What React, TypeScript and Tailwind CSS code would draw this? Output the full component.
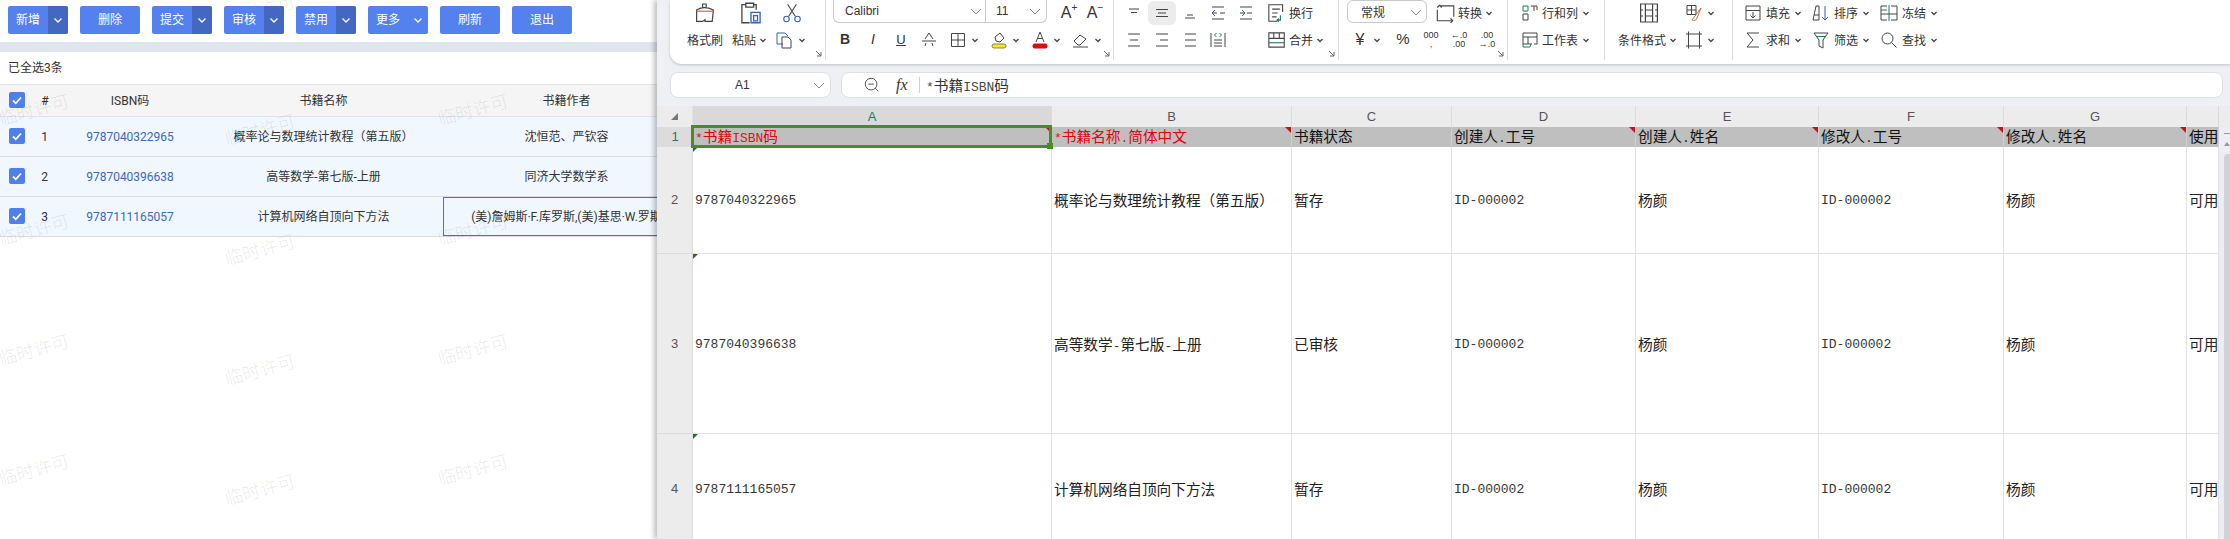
import type { ReactNode } from "react";

const CJK = `"Noto Sans CJK SC", "Liberation Sans", sans-serif`;
const LEFT_FONT = `Roboto, "Noto Sans CJK SC", sans-serif`;
const SANS = `"Liberation Sans", sans-serif`;

function Svg({ children, size = 20 }: { children: ReactNode; size?: number }) {
  return (
    <svg width={size} height={size} viewBox="0 0 20 20" fill="none" stroke="#444" strokeWidth="1" className="shrink-0">
      {children}
    </svg>
  );
}

function Chev({ big = false }: { big?: boolean }) {
  return big ? (
    <svg width="14" height="14" viewBox="0 0 14 14" fill="none" stroke="#8a8a8a" strokeWidth="1" className="shrink-0">
      <path d="M2 5l5 5 5-5" />
    </svg>
  ) : (
    <svg width="14" height="14" viewBox="0 0 14 14" fill="none" stroke="#444" strokeWidth="1.3" className="shrink-0">
      <path d="M4.500 6l2.500 2.500L9.500 6" />
    </svg>
  );
}

function Corner() {
  return (
    <svg width="7" height="7" viewBox="0 0 7 7" fill="none" stroke="#666" strokeWidth="1" className="absolute bottom-[3px] right-[3px]">
      <path d="M1 1l5 5M6 2v4H2" />
    </svg>
  );
}

const Slot = ({ w, children }: { w: string; children: ReactNode }) => (
  <div className={`flex items-center justify-center shrink-0 ${w}`}>{children}</div>
);

const icons = {
  painter: (
    <Svg size={24}>
      <path d="M8 2.500h3v3H8zM3 7.500c4-2.500 9-2.500 14 0l-1 9.500H10v-1.500L8 17H3z" />
      <path d="M3 8.500h14" stroke="#b5744a" />
    </Svg>
  ),
  paste: (
    <Svg size={26}>
      <path d="M6 3.500H3v14h6M12 3.500h2v4M6 2.500h6v3H6z" />
      <path d="M10 9.500h7v8h-7z" stroke="#2f62b8" />
      <path d="M12 12h3v4h-3z" stroke="#2f62b8" />
    </Svg>
  ),
  cut: (
    <Svg size={22}>
      <path d="M6 2l7 11M14 2L7 13" />
      <circle cx="5" cy="15.500" r="2.500" stroke="#2f62b8" />
      <circle cx="15" cy="15.500" r="2.500" stroke="#2f62b8" />
    </Svg>
  ),
  copy: (
    <Svg>
      <path d="M8 14H2V3h8l3 3" stroke="#2f62b8" />
      <path d="M7 7h6l3 3v8H7z" />
    </Svg>
  ),
  strike: (
    <Svg>
      <path d="M6 9l4-6 4 6M7 13l-1 3M13 13l1 3M3 11h14" />
    </Svg>
  ),
  border: (
    <Svg>
      <path d="M3.500 3.500h13v13h-13zM10 3.500v13M3.500 10h13" />
    </Svg>
  ),
  fill: (
    <Svg>
      <path d="M6 7l5-4 4 5-4 4-4-1z" />
      <rect x="3" y="14" width="14" height="4" rx="2" fill="#f3e62b" stroke="#8f8a20" />
    </Svg>
  ),
  font: (
    <Svg>
      <path d="M6 12l4-10 4 10M7.500 8.500h5" />
      <rect x="3" y="14" width="14" height="4" rx="1.500" fill="#dd0a0a" stroke="#dd0a0a" />
    </Svg>
  ),
  eraser: (
    <Svg>
      <path d="M3 11l6-6 6 4-6 6H7zM2 17h15" />
    </Svg>
  ),
  wrap: (
    <Svg size={22}>
      <path d="M16 9V2.500H3.500v15H11M6.500 6.500h7M6.500 10h5M6.500 13.500h4" />
      <path d="M14 12v4.500h-3M12.500 15l-1.500 1.500 1.500 1.500" stroke="#1a7a5a" />
    </Svg>
  ),
  merge: (
    <Svg size={22}>
      <path d="M3.500 3.500h14v13h-14zM8 3.500v5M13 3.500v5M3.500 8.500h14" />
      <path d="M3.500 12.500h14" stroke="#1a7a5a" />
    </Svg>
  ),
  convert: (
    <Svg size={22}>
      <path d="M5 3.500h13v10M3 7v10h13M3 5l2-2 2 2M15 15l2 2-2 2" />
    </Svg>
  ),
  rows: (
    <Svg>
      <path d="M3 3h5v5H3z" stroke="#1a7a5a" />
      <path d="M3 11h5v6H3zM11 3h6v4M14 3v5" />
    </Svg>
  ),
  sheet: (
    <Svg>
      <path d="M3 3h14v11h-3M3 3v11h9M3 7h14M8 7v7" />
      <path d="M3 14v3h7l1-3" stroke="#1a7a5a" />
    </Svg>
  ),
  cond: (
    <Svg size={24}>
      <path d="M3 2.500h14v15H3zM7 2.500v15M13 2.500v15M7 7.500h6M7 12.500h6M3 7.500h2M3 12.500h2M15 7.500h2M15 12.500h2" />
    </Svg>
  ),
  style: (
    <Svg>
      <path d="M3 2.500h9v9H3zM7.500 2.500v9M3 7h9" />
      <path d="M17 5l-6 8-3 4c2 1 5 0 5-2z" stroke="#c9703a" />
    </Svg>
  ),
  crop: (
    <Svg>
      <path d="M2 4h16M2 16h16M4.500 1.500v17M15.500 1.500v17" />
    </Svg>
  ),
  fillDown: (
    <Svg>
      <path d="M3 3h14v14H3zM3 7.500h14M10 9v6M7.500 12.500L10 15l2.500-2.500" />
    </Svg>
  ),
  sort: (
    <Svg>
      <path d="M2 17l3-14h3v14H2zM3 12h5" />
      <path d="M14 3v14M11 14l3 3 3-3" stroke="#2f62b8" />
    </Svg>
  ),
  freeze: (
    <Svg>
      <path d="M8 3H2v14h6M12 3h6v14h-6M2 11h16" />
      <path d="M10 2v16" stroke="#1a7a5a" />
      <path d="M2 7h6" stroke="#1a7a5a" />
    </Svg>
  ),
  sum: (
    <Svg>
      <path d="M16 3H4l6 7-6 7h12" />
    </Svg>
  ),
  filter: (
    <Svg>
      <path d="M3 3h14l-5 7v8l-4-2v-6z" />
      <path d="M6 6.500h8" stroke="#1a7a5a" />
    </Svg>
  ),
  find: (
    <Svg>
      <circle cx="8.500" cy="8.500" r="5.500" />
      <path d="M12.500 12.500l5 5" />
    </Svg>
  ),
};

const T = ({ children, className = "" }: { children: ReactNode; className?: string }) => (
  <span className={`text-[12px] leading-none text-[#333] whitespace-nowrap ${className}`}>{children}</span>
);

const Row = ({ children }: { children: ReactNode }) => <div className="flex items-center h-[26px]">{children}</div>;

function Tool({ icon, label, ml }: { icon: ReactNode; label: string; ml: string }) {
  return (
    <div className={`flex items-center ${ml}`}>
      {icon}
      <T className="ml-[3px] mr-[1px]">{label}</T>
      <Chev />
    </div>
  );
}

function Ribbon() {
  return (
    <div className="ml-[13px] h-[64px] bg-white rounded-bl-xl shadow-[0_1px_3px_rgba(0,0,0,0.2)] flex" style={{ fontFamily: CJK }}>
      <div className="relative w-[156px] h-[60px] border-r border-[#dcdcdc] flex pl-[10px]">
        <div className="w-[50px] flex flex-col items-center">
          <div className="h-[26px] flex items-center">{icons.painter}</div>
          <div className="h-[27px] flex items-center"><T>格式刷</T></div>
        </div>
        <div className="w-[42px] flex flex-col items-center">
          <div className="h-[26px] flex items-center">{icons.paste}</div>
          <div className="h-[27px] flex items-center"><T>粘贴</T><Chev /></div>
        </div>
        <div className="w-[40px] flex flex-col items-center">
          <div className="h-[26px] flex items-center">{icons.cut}</div>
          <div className="h-[27px] flex items-center">{icons.copy}<Chev /></div>
        </div>
        <Corner />
      </div>

      <div className="relative w-[288px] h-[60px] border-r border-[#dcdcdc]">
        <Row>
          <div className="ml-[7px] w-[214px] h-[23px] -mt-[3px] flex border border-t-0 border-[#c9c9c9] rounded-b-md text-[#333]">
            <div className="w-[152px] flex items-center justify-between pl-[11px] pr-[2px] border-r border-[#c9c9c9]">
              <span className="text-[12px]" style={{ fontFamily: SANS }}>Calibri</span>
              <Chev big />
            </div>
            <div className="flex-1 flex items-center justify-between pl-[10px] pr-[4px]">
              <span className="text-[12px]" style={{ fontFamily: SANS }}>11</span>
              <Chev big />
            </div>
          </div>
          <Slot w="w-[26px] ml-[6px]">
            <span className="text-[16px] leading-none text-[#333] relative" style={{ fontFamily: SANS }}>
              A<span className="text-[10px] leading-none absolute -top-[2px] -right-[6px]">+</span>
            </span>
          </Slot>
          <Slot w="w-[26px]">
            <span className="text-[16px] leading-none text-[#333] relative" style={{ fontFamily: SANS }}>
              A<span className="text-[10px] leading-none absolute -top-[2px] -right-[6px]">−</span>
            </span>
          </Slot>
        </Row>
        <div className="flex items-center h-[27px] pl-[5px]" style={{ fontFamily: SANS }}>
          <Slot w="w-[28px]"><span className="text-[14px] font-bold text-[#333]">B</span></Slot>
          <Slot w="w-[28px]"><span className="text-[14px] italic text-[#333]">I</span></Slot>
          <Slot w="w-[28px]"><span className="text-[13px] underline text-[#333]">U</span></Slot>
          <Slot w="w-[28px]">{icons.strike}</Slot>
          <div className="ml-[5px] w-[41px] flex items-center">{icons.border}<Chev /></div>
          <div className="w-[41px] flex items-center">{icons.fill}<Chev /></div>
          <div className="w-[41px] flex items-center">{icons.font}<Chev /></div>
          <div className="w-[41px] flex items-center">{icons.eraser}<Chev /></div>
        </div>
        <Corner />
      </div>

      <div className="relative w-[225px] h-[60px] border-r border-[#dcdcdc] pl-[6px]">
        <Row>
          <Slot w="w-[28px]"><Svg><path d="M5 6h10M7 9.500h6" /></Svg></Slot>
          <Slot w="w-[28px] h-[24px] bg-[#ececec] rounded-md"><Svg><path d="M4 6.500h12M6 10h8M4 13.500h12" /></Svg></Slot>
          <Slot w="w-[28px]"><Svg><path d="M7 12h6M5 15h10" /></Svg></Slot>
          <Slot w="w-[28px]"><Svg><path d="M4 4h12M4 16h12M12 10h5M4 10h5" /><path d="M7 7l-3 3 3 3" stroke="#2f62b8" /></Svg></Slot>
          <Slot w="w-[28px]"><Svg><path d="M4 4h12M4 16h12M11 10h5M4 10h5" /><path d="M6 7l3 3-3 3" stroke="#2f62b8" /></Svg></Slot>
          <div className="ml-[5px]">{icons.wrap}</div>
          <T className="ml-[2px]">换行</T>
        </Row>
        <div className="flex items-center h-[27px]">
          <Slot w="w-[28px]"><Svg><path d="M4 4h12M6 10h8M4 16h12" /></Svg></Slot>
          <Slot w="w-[28px]"><Svg><path d="M4 4h12M8 10h8M4 16h12" /></Svg></Slot>
          <Slot w="w-[28px]"><Svg><path d="M5 4h11M5 10h11M5 16h11" /></Svg></Slot>
          <Slot w="w-[28px]"><Svg><path d="M3 3v14M17 3v14M6 10h8M6 13h8M6 16h8" /><path d="M8.500 3L6.500 5l2 2M11.500 3l2 2-2 2" stroke="#2f62b8" /></Svg></Slot>
          <div className="ml-[33px]">{icons.merge}</div>
          <T className="ml-[2px]">合并</T>
          <Chev />
        </div>
        <Corner />
      </div>

      <div className="relative w-[169px] h-[60px] border-r border-[#dcdcdc]">
        <Row>
          <div className="ml-[8px] w-[80px] h-[23px] -mt-[3px] flex items-center justify-between pl-[13px] pr-[3px] border border-[#c9c9c9] rounded-md">
            <T>常规</T>
            <Chev big />
          </div>
          <div className="ml-[7px]">{icons.convert}</div>
          <T className="ml-[2px]">转换</T>
          <Chev />
        </Row>
        <div className="flex items-center h-[27px] pl-[11px]" style={{ fontFamily: SANS }}>
          <Slot w="w-[20px]"><span className="text-[16px] text-[#333]">¥</span></Slot>
          <Chev />
          <Slot w="w-[28px] ml-[5px]"><span className="text-[15px] text-[#333]">%</span></Slot>
          <Slot w="w-[28px]"><span className="text-[9px] leading-[9px] text-[#333] text-center">000<br />,</span></Slot>
          <Slot w="w-[28px]"><span className="text-[9px] leading-[9px] text-[#333] text-center">←.0<br />.00</span></Slot>
          <Slot w="w-[28px]"><span className="text-[9px] leading-[9px] text-[#333] text-center">.00<br />→.0</span></Slot>
        </div>
        <Corner />
      </div>

      <div className="w-[97px] h-[60px] border-r border-[#dcdcdc] pl-[12px]">
        <Row>{icons.rows}<T className="ml-[2px] mr-px">行和列</T><Chev /></Row>
        <div className="flex items-center h-[27px]">{icons.sheet}<T className="ml-[2px] mr-px">工作表</T><Chev /></div>
      </div>

      <div className="w-[128px] h-[60px] border-r border-[#dcdcdc] flex pl-[13px]">
        <div className="w-[62px] flex flex-col items-center">
          <div className="h-[26px] flex items-center">{icons.cond}</div>
          <div className="h-[27px] flex items-center"><T>条件格式</T><Chev /></div>
        </div>
        <div className="ml-[4px]">
          <Row>{icons.style}<Chev /></Row>
          <div className="flex items-center h-[27px]">{icons.crop}<Chev /></div>
        </div>
      </div>

      <div>
        <Row>
          <Tool icon={icons.fillDown} label="填充" ml="ml-[10px]" />
          <Tool icon={icons.sort} label="排序" ml="ml-[6px]" />
          <Tool icon={icons.freeze} label="冻结" ml="ml-[6px]" />
        </Row>
        <div className="flex items-center h-[27px]">
          <Tool icon={icons.sum} label="求和" ml="ml-[10px]" />
          <Tool icon={icons.filter} label="筛选" ml="ml-[6px]" />
          <Tool icon={icons.find} label="查找" ml="ml-[6px]" />
        </div>
      </div>
    </div>
  );
}

function Mixed({ text }: { text: string }) {
  const parts = text.split(/([\u4e00-\u9fff（）]+)/);
  return (
    <span className="whitespace-nowrap text-[13px]" style={{ fontFamily: `"Liberation Mono", "Noto Sans CJK SC", monospace` }}>
      {parts.map((p, i) =>
        i % 2 ? (
          <span key={i} className="text-[14.67px]" style={{ fontFamily: CJK }}>{p}</span>
        ) : (
          <span key={i} className="opacity-90">{p}</span>
        ),
      )}
    </span>
  );
}

function FormulaBar() {
  return (
    <div className="flex h-[26px] mt-[8px] ml-[13px] mr-[7px] gap-[10px]">
      <div className="w-[161px] flex items-center bg-white rounded-lg border border-[#dcdfe3] pl-[64px] pr-[4px] justify-between" style={{ fontFamily: SANS }}>
        <span className="text-[12px] text-[#333]">A1</span>
        <Chev big />
      </div>
      <div className="flex-1 flex items-center bg-white rounded-lg border border-[#dcdfe3]">
        <div className="ml-[21px]">
          <Svg size={18}><circle cx="9" cy="9" r="6.500" /><path d="M6 9h6M13.500 13.500l3.500 3.500" /></Svg>
        </div>
        <span className="ml-[15px] w-[22px] text-[16px] italic text-[#333]" style={{ fontFamily: `"Liberation Serif", serif` }}>fx</span>
        <div className="ml-[1px] w-px h-[16px] bg-[#cfcfcf]" />
        <div className="ml-[6px] text-[#333]"><Mixed text="*书籍ISBN码" /></div>
      </div>
    </div>
  );
}

const Tri = ({ color = "red" }: { color?: "red" | "green" }) =>
  color === "red" ? (
    <span className="absolute top-0 right-0 w-0 h-0 border-t-[6px] border-l-[6px] border-t-[#c8101a] border-l-transparent" />
  ) : (
    <span className="absolute top-0 left-0 w-0 h-0 border-t-[5px] border-r-[5px] border-t-[#1a7a1a] border-r-transparent" />
  );

const COLS = ["A", "B", "C", "D", "E", "F", "G", ""];
const HEAD = ["*书籍ISBN码", "*书籍名称.简体中文", "书籍状态", "创建人.工号", "创建人.姓名", "修改人.工号", "修改人.姓名", "使用"];
const SHEET_ROWS = [
  { n: 2, cells: ["9787040322965", "概率论与数理统计教程（第五版）", "暂存", "ID-000002", "杨颜", "ID-000002", "杨颜", "可用"] },
  { n: 3, cells: ["9787040396638", "高等数学-第七版-上册", "已审核", "ID-000002", "杨颜", "ID-000002", "杨颜", "可用"] },
  { n: 4, cells: ["9787111165057", "计算机网络自顶向下方法", "暂存", "ID-000002", "杨颜", "ID-000002", "杨颜", "可用"] },
];

function Sheet() {
  return (
    <div className="flex mt-[8px]">
      <div className="w-[1562px] grid grid-cols-[36px_359px_240px_160px_184px_183px_185px_183px_32px] grid-rows-[21px_20px_107px_180px_110px] bg-white">
        <div className="bg-[#ececec] flex items-center justify-center border-r border-[#e0e0e0]">
          <span className="w-0 h-0 border-b-[7px] border-l-[7px] border-b-[#777] border-l-transparent" />
        </div>
        {COLS.map((c, i) => (
          <div
            key={i}
            className={`flex items-center justify-center text-[13px] border-r border-[#dcdcdc] ${i === 0 ? "bg-[#d9d9d9] text-[#1f7a6d]" : "bg-[#ececec] text-[#555]"}`}
            style={{ fontFamily: SANS }}
          >
            {c}
          </div>
        ))}

        <div className="bg-[#dcdcdc] text-[#1f7a6d] flex items-center justify-center text-[13px]" style={{ fontFamily: SANS }}>1</div>
        {HEAD.map((h, i) => (
          <div key={i} className={`relative flex items-center pl-[2px] pb-[1px] bg-[#bfbfbf] border-r border-[#d0d0d0] ${i < 2 ? "text-[#e3000f]" : "text-[#111]"}`}>
            <div className="overflow-hidden"><Mixed text={h} /></div>
            {i !== 2 && i !== 7 && <Tri />}
            {i === 0 && (
              <div className="absolute z-10 -left-[2px] -top-[2px] -right-[1px] -bottom-[1px] border-[3px] border-[#4a8a2a]">
                <span className="absolute -right-[4px] -bottom-[4px] w-[6px] h-[6px] bg-[#4a8a2a]" />
              </div>
            )}
          </div>
        ))}

        {SHEET_ROWS.map((r) => (
          <div key={r.n} className="contents">
            <div className="bg-[#ececec] text-[#555] flex items-center justify-center text-[13px] border-r border-b border-[#dcdcdc]" style={{ fontFamily: SANS }}>
              {r.n}
            </div>
            {r.cells.map((c, i) => (
              <div key={i} className="relative flex items-center pl-[2px] pt-[2px] text-[#222] overflow-hidden border-r border-b border-[#e2e2e2]">
                <Mixed text={c} />
                {i === 0 && <Tri color="green" />}
              </div>
            ))}
          </div>
        ))}
      </div>
      <div className="flex-1 flex flex-col items-end">
        <div className="self-stretch h-[21px] bg-[#ececec]" />
        <div className="self-stretch flex-1 bg-[#eceef2] flex flex-col items-end">
          <span className="mt-[6px] w-[6px] h-px bg-[#999]" />
          <span className="mt-[8px] w-0 h-0 border-l-[3px] border-r-[3px] border-b-[4px] border-l-transparent border-r-transparent border-b-[#999]" />
          <span className="mt-[8px] w-[6px] flex-1 rounded-tl bg-[#cfd2d6]" />
        </div>
      </div>
    </div>
  );
}

function Btn({ label, drop, plain }: { label: string; drop?: boolean; plain?: boolean }) {
  return (
    <div className="w-[60px] h-[28px] flex rounded-[2px] overflow-hidden bg-[#5581ef] text-white text-[12px] shrink-0">
      <span className="flex-1 flex items-center justify-center">{label}</span>
      {(drop || plain) && (
        <span className={`w-[20px] flex items-center justify-center ${drop ? "bg-[#4467bf]" : ""}`}>
          <svg width="12" height="12" viewBox="0 0 12 12" fill="none" stroke="white" strokeWidth="1.3">
            <path d="M2.500 4.500L6 8l3.500-3.500" />
          </svg>
        </span>
      )}
    </div>
  );
}

const Check = () => (
  <span className="w-[16px] h-[16px] -mt-[1px] rounded-[2px] bg-[#4f7fe8] flex items-center justify-center">
    <svg width="12" height="12" viewBox="0 0 12 12" fill="none" stroke="white" strokeWidth="1.800">
      <path d="M2 6.500l2.800 2.800L10 3.500" />
    </svg>
  </span>
);

const BOOKS = [
  { isbn: "9787040322965", name: "概率论与数理统计教程（第五版）", author: "沈恒范、严钦容" },
  { isbn: "9787040396638", name: "高等数学-第七版-上册", author: "同济大学数学系" },
  { isbn: "9787111165057", name: "计算机网络自顶向下方法", author: "(美)詹姆斯·F.库罗斯,(美)基思·W.罗斯" },
];

const GRID = "grid grid-cols-[33px_23px_148px_239px_247px]";

// 水印 watermark positions
const MARKS: { x: number; y: number }[] = [];
for (const x of [34, 473]) for (const y of [110, 230, 350, 470]) MARKS.push({ x, y });
for (const y of [10, 130, 250, 370, 490]) MARKS.push({ x: 260, y });

function LeftPanel() {
  return (
    <div className="relative w-[657px] h-[539px] overflow-hidden bg-white shrink-0 text-[#333]" style={{ fontFamily: LEFT_FONT }}>
      <div className="relative z-10 flex gap-[12px] h-[42px] pt-[6px] pl-[8px]">
        <Btn label="新增" drop />
        <Btn label="删除" />
        <Btn label="提交" drop />
        <Btn label="审核" drop />
        <Btn label="禁用" drop />
        <Btn label="更多" plain />
        <Btn label="刷新" />
        <Btn label="退出" />
      </div>
      <div className="h-[10px] bg-[#e1e5ee]" />
      <div className="h-[32px] flex items-center pl-[8px] text-[12px]">已全选3条</div>
      <div className={`${GRID} w-[690px] h-[33px] items-center text-center text-[12px] bg-[#f5f5f5] border-y border-[#e2e2e2]`}>
        <span className="flex justify-center"><Check /></span>
        <span className="pl-[1px]">#</span>
        <span>ISBN码</span>
        <span>书籍名称</span>
        <span>书籍作者</span>
      </div>
      {BOOKS.map((b, i) => (
        <div key={b.isbn} className={`${GRID} w-[690px] h-[40px] items-center text-center text-[12px] bg-[#f0f7ff] border-b border-[#dcdcdc]`}>
          <span className="flex justify-center"><Check /></span>
          <span>{i + 1}</span>
          <span className="text-[#3d68b8]">{b.isbn}</span>
          <span>{b.name}</span>
          <span className={`h-full flex items-center justify-center whitespace-nowrap ${i === 2 ? "border border-[#4a72c0]" : ""}`}>{b.author}</span>
        </div>
      ))}
      {MARKS.map((m) => (
        <span
          key={`${m.x}-${m.y}`}
          className="absolute -translate-x-1/2 -translate-y-1/2 -rotate-[15deg] text-[18px] font-light text-black/10 whitespace-nowrap pointer-events-none"
          style={{ left: m.x, top: m.y }}
        >
          临时许可
        </span>
      ))}
    </div>
  );
}

export default function App() {
  return (
    <div className="w-[2230px] h-[539px] overflow-hidden flex bg-white">
      <LeftPanel />
      <div className="relative flex-1 bg-[#eef0f3] shadow-[-3px_0_5px_rgba(0,0,0,0.25)]">
        <Ribbon />
        <FormulaBar />
        <Sheet />
      </div>
    </div>
  );
}
